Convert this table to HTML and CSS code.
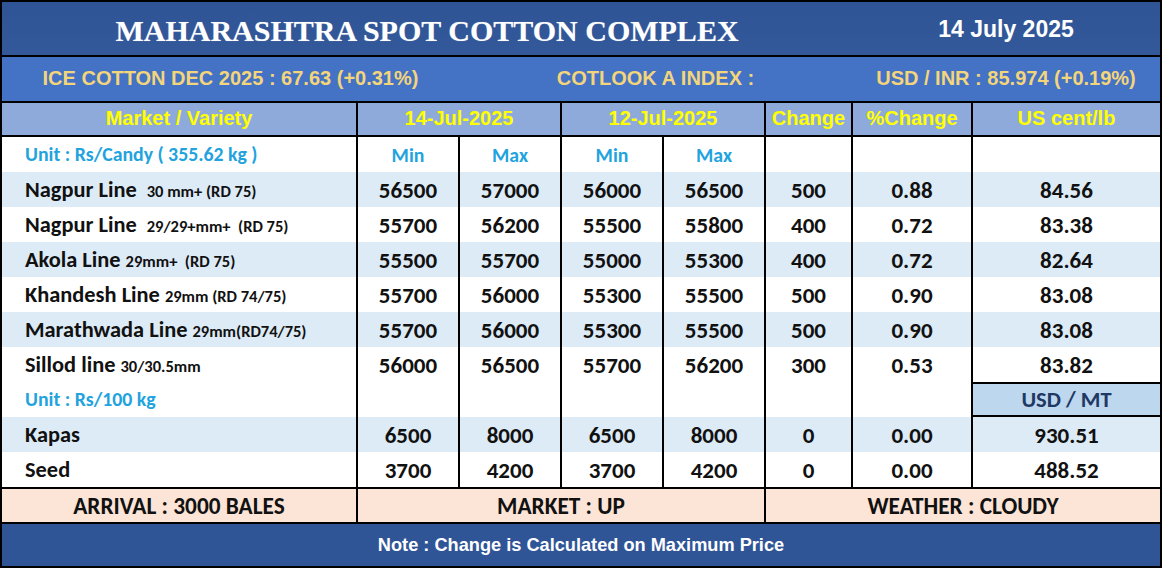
FILE: index.html
```html
<!DOCTYPE html>
<html>
<head>
<meta charset="utf-8">
<title>Maharashtra Spot Cotton Complex</title>
<link rel="stylesheet" href="styles.css">
</head>
<body>
<div class="sheet">
  <div class="title-band">
    <div class="title">MAHARASHTRA SPOT COTTON COMPLEX</div>
    <div class="date">14 July 2025</div>
  </div>
  <div class="ticker-band">
    <div class="tick">ICE COTTON DEC 2025 : 67.63 (+0.31%)</div>
    <div class="tick">COTLOOK A INDEX :</div>
    <div class="tick">USD / INR : 85.974 (+0.19%)</div>
  </div>
  <div class="grid">
    <div class="hd c1">Market / Variety</div>
    <div class="hd bl span2">14-Jul-2025</div>
    <div class="hd bl span2">12-Jul-2025</div>
    <div class="hd bl">Change</div>
    <div class="hd bl">%Change</div>
    <div class="hd bl">US cent/lb</div>

    <div class="cell c1 unit">Unit : Rs/Candy ( 355.62 kg )</div>
    <div class="cell bl unit">Min</div>
    <div class="cell bl unit">Max</div>
    <div class="cell bl unit">Min</div>
    <div class="cell bl unit">Max</div>
    <div class="cell bl"></div>
    <div class="cell bl"></div>
    <div class="cell bl"></div>

    <div class="cell c1 sh"><span class="name">Nagpur Line</span><span class="spec spec-gap">30 mm+ (RD 75)</span></div>
    <div class="cell bl sh">56500</div>
    <div class="cell bl sh">57000</div>
    <div class="cell bl sh">56000</div>
    <div class="cell bl sh">56500</div>
    <div class="cell bl sh">500</div>
    <div class="cell bl sh">0.88</div>
    <div class="cell bl sh">84.56</div>

    <div class="cell c1"><span class="name">Nagpur Line</span><span class="spec spec-gap">29/29+mm+&nbsp; (RD 75)</span></div>
    <div class="cell bl">55700</div>
    <div class="cell bl">56200</div>
    <div class="cell bl">55500</div>
    <div class="cell bl">55800</div>
    <div class="cell bl">400</div>
    <div class="cell bl">0.72</div>
    <div class="cell bl">83.38</div>

    <div class="cell c1 sh"><span class="name">Akola Line</span><span class="spec">29mm+&nbsp; (RD 75)</span></div>
    <div class="cell bl sh">55500</div>
    <div class="cell bl sh">55700</div>
    <div class="cell bl sh">55000</div>
    <div class="cell bl sh">55300</div>
    <div class="cell bl sh">400</div>
    <div class="cell bl sh">0.72</div>
    <div class="cell bl sh">82.64</div>

    <div class="cell c1"><span class="name">Khandesh Line</span><span class="spec">29mm (RD 74/75)</span></div>
    <div class="cell bl">55700</div>
    <div class="cell bl">56000</div>
    <div class="cell bl">55300</div>
    <div class="cell bl">55500</div>
    <div class="cell bl">500</div>
    <div class="cell bl">0.90</div>
    <div class="cell bl">83.08</div>

    <div class="cell c1 sh"><span class="name">Marathwada Line</span><span class="spec">29mm(RD74/75)</span></div>
    <div class="cell bl sh">55700</div>
    <div class="cell bl sh">56000</div>
    <div class="cell bl sh">55300</div>
    <div class="cell bl sh">55500</div>
    <div class="cell bl sh">500</div>
    <div class="cell bl sh">0.90</div>
    <div class="cell bl sh">83.08</div>

    <div class="cell c1"><span class="name">Sillod line</span><span class="spec">30/30.5mm</span></div>
    <div class="cell bl">56000</div>
    <div class="cell bl">56500</div>
    <div class="cell bl">55700</div>
    <div class="cell bl">56200</div>
    <div class="cell bl">300</div>
    <div class="cell bl">0.53</div>
    <div class="cell bl">83.82</div>

    <div class="cell c1 unit">Unit : Rs/100 kg</div>
    <div class="cell bl"></div>
    <div class="cell bl"></div>
    <div class="cell bl"></div>
    <div class="cell bl"></div>
    <div class="cell bl"></div>
    <div class="cell bl"></div>
    <div class="cell bl usdmt">USD / MT</div>

    <div class="cell c1 sh"><span class="name">Kapas</span></div>
    <div class="cell bl sh">6500</div>
    <div class="cell bl sh">8000</div>
    <div class="cell bl sh">6500</div>
    <div class="cell bl sh">8000</div>
    <div class="cell bl sh">0</div>
    <div class="cell bl sh">0.00</div>
    <div class="cell bl sh">930.51</div>

    <div class="cell c1"><span class="name">Seed</span></div>
    <div class="cell bl">3700</div>
    <div class="cell bl">4200</div>
    <div class="cell bl">3700</div>
    <div class="cell bl">4200</div>
    <div class="cell bl">0</div>
    <div class="cell bl">0.00</div>
    <div class="cell bl">488.52</div>
  </div>
  <div class="footer">
    <div class="foot">ARRIVAL : 3000 BALES</div>
    <div class="foot bl">MARKET : UP</div>
    <div class="foot bl">WEATHER : CLOUDY</div>
  </div>
  <div class="note">Note : Change is Calculated on Maximum Price</div>
</div>
</body>
</html>
```

FILE: styles.css
```css
* { box-sizing: border-box; }
html, body { margin: 0; padding: 0; background: #ffffff; }

.sheet {
  width: 1162px;
  height: 568px;
  border: 2px solid #000;
  display: flex;
  flex-direction: column;
  overflow: hidden;
}

.title-band {
  height: 53px;
  display: grid;
  grid-template-columns: 850px 1fr;
  align-items: center;
  background: linear-gradient(#2e5495, #33599b);
  color: #ffffff;
}
.title {
  text-align: center;
  font-family: "Liberation Serif", "Times New Roman", serif;
  font-weight: bold;
  font-size: 30px;
  padding-top: 4px;
  text-shadow: 0 0 1px rgba(255,255,255,0.4);
}
.date {
  text-align: center;
  font-family: "Liberation Sans", Arial, sans-serif;
  font-weight: bold;
  font-size: 23px;
  padding-top: 2px;
}

.ticker-band {
  height: 46px;
  border-top: 2px solid #000;
  display: grid;
  grid-template-columns: 457px 393px 1fr;
  align-items: center;
  background: #4472c4;
  color: #f3d57c;
  font-family: "Liberation Sans", Arial, sans-serif;
  font-weight: bold;
  font-size: 20px;
}
.tick { text-align: center; padding-bottom: 1px; }

.grid {
  border-top: 2px solid #000;
  display: grid;
  grid-template-columns: 354px 102px 102px 102px 102px 87px 120px 189px;
  grid-template-rows: 34px repeat(10, 35px);
}

.bl { border-left: 2px solid #000; }
.span2 { grid-column: span 2; }

.hd {
  background: #8eaadb;
  border-bottom: 2px solid #000;
  color: #ffff00;
  font-family: "Liberation Sans", Arial, sans-serif;
  font-weight: bold;
  font-size: 20px;
  display: flex;
  align-items: center;
  justify-content: center;
  padding-bottom: 1px;
}

.cell {
  display: flex;
  align-items: center;
  justify-content: center;
  font-family: Carlito, Calibri, Lato, sans-serif;
  font-weight: bold;
  font-size: 23px;
  color: #111;
  background: #fff;
}
.cell.c1 {
  display: block;
  line-height: 35px;
  padding-left: 23px;
  white-space: nowrap;
}
.sh { background: #ddebf7; }
.unit { color: #22a3de; font-size: 19.8px; }

.name { font-size: 22.4px; }
.spec { font-size: 16.5px; margin-left: 5px; }
.spec-gap { margin-left: 10px; }

.usdmt {
  background: #bdd7ee;
  color: #1f3864;
  border-top: 2px solid #000;
  border-bottom: 2px solid #000;
  font-size: 22.5px;
}

.footer {
  height: 35px;
  border-top: 2px solid #000;
  display: grid;
  grid-template-columns: 354px 408px 396px;
  background: #fce4d6;
}
.foot {
  display: flex;
  align-items: center;
  justify-content: center;
  font-family: Carlito, Calibri, Lato, sans-serif;
  font-weight: bold;
  font-size: 23.3px;
  color: #111;
}

.note {
  flex: 1;
  border-top: 2px solid #000;
  background: #2f5597;
  color: #ffffff;
  display: flex;
  align-items: center;
  justify-content: center;
  font-family: "Liberation Sans", Arial, sans-serif;
  font-weight: bold;
  font-size: 18.2px;
}
```
